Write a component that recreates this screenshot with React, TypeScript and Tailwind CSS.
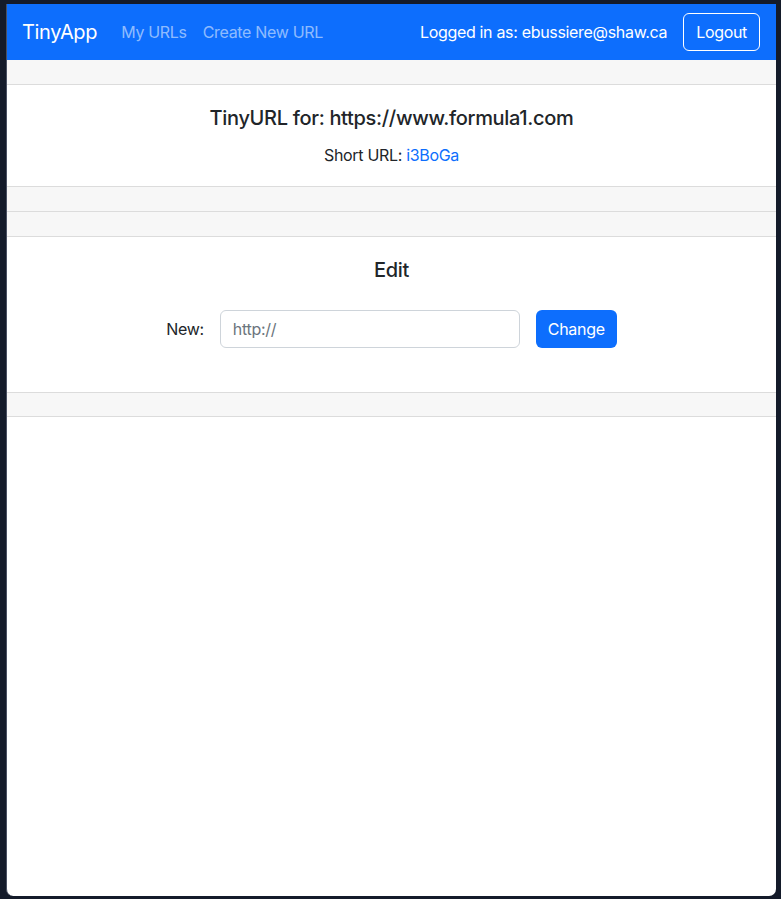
import React from 'react';

export default function App() {
  return (
    <div className="min-h-screen bg-[#141b2a] pt-[4px] pl-[6px] pr-[5px] pb-[3px] font-['Inter','Liberation_Sans',sans-serif] tracking-[-0.02em] text-[#212529]">
      <div className="h-[892px] bg-white rounded-b-[7px] border-l border-[#4a5163] overflow-hidden flex flex-col">
        {/* Navbar */}
        <nav className="h-[56px] shrink-0 bg-[#0d6efd] flex items-center justify-between pl-[15px] pr-[16px]">
          <div className="flex items-center">
            <a className="text-[20px] leading-[30px] text-white mr-[16px]">TinyApp</a>
            <a className="px-[8px] text-[16px] text-[rgba(255,255,255,0.55)]">My URLs</a>
            <a className="px-[8px] text-[16px] text-[rgba(255,255,255,0.55)]">Create New URL</a>
          </div>
          <div className="flex items-center gap-[16px]">
            <span className="text-[16px] text-white">Logged in as: ebussiere@shaw.ca</span>
            <button className="h-[38px] px-[12px] border border-white rounded-[6px] text-[16px] text-white">
              Logout
            </button>
          </div>
        </nav>

        {/* Short URL card */}
        <div className="border-b border-[#dcdcdc] text-center">
          <div className="h-[25px] bg-[#f7f7f7] border-b border-[#dcdcdc]"></div>
          <div className="pt-[21px] pb-[19px]">
            <h5 className="text-[20px] leading-[24px] font-medium">TinyURL for: https://www.formula1.com</h5>
            <p className="mt-[13px] text-[16px] leading-[24px]">
              Short URL: <a className="text-[#0d6efd]">i3BoGa</a>
            </p>
          </div>
          <div className="h-[25px] bg-[#f7f7f7] border-t border-[#dcdcdc]"></div>
        </div>

        {/* Edit card */}
        <div className="border-b border-[#dcdcdc] text-center">
          <div className="h-[25px] bg-[#f7f7f7] border-b border-[#dcdcdc]"></div>
          <div className="pt-[21px] pb-[44px]">
            <h5 className="text-[20px] leading-[24px] font-medium">Edit</h5>
            <form className="mt-[28px] flex items-center justify-center gap-[16px]">
              <label className="text-[16px]">New:</label>
              <input
                type="text"
                placeholder="http://"
                className="w-[300px] h-[38px] px-[12px] border border-[#ced4da] rounded-[6px] text-[16px] placeholder-[#6c757d] outline-none"
              />
              <button type="button" className="h-[38px] px-[12px] bg-[#0d6efd] text-white text-[16px] rounded-[6px]">
                Change
              </button>
            </form>
          </div>
          <div className="h-[24px] bg-[#f7f7f7] border-t border-[#dcdcdc]"></div>
        </div>
      </div>
    </div>
  );
}
